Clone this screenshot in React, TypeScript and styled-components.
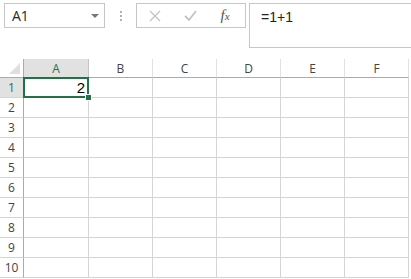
import React from "react";
import styled, { createGlobalStyle } from "styled-components";

const GlobalStyle = createGlobalStyle`
  *, *::before, *::after {
    box-sizing: border-box;
  }
  html, body {
    margin: 0;
    padding: 0;
    background: #ffffff;
    font-family: "Open Sans", "Liberation Sans", sans-serif;
    overflow: hidden;
  }
`;

const COLUMNS = ["A", "B", "C", "D", "E", "F"];
const ROWS = [1, 2, 3, 4, 5, 6, 7, 8, 9, 10];

const Page = styled.div`
  width: 411px;
  height: 279px;
  display: flex;
  flex-direction: column;
  overflow: hidden;
`;

const FormulaBar = styled.div`
  display: flex;
  align-items: flex-start;
  padding: 3px 0 0 4px;
  height: 59px;
`;

const NameBox = styled.div`
  width: 101px;
  height: 25px;
  border: 1px solid #c6c6c6;
  display: flex;
  align-items: center;
  justify-content: space-between;
  padding: 0 5px 0 7px;
  font-size: 14px;
  color: #262626;
`;

const Caret = styled.span`
  width: 0;
  height: 0;
  border-left: 4px solid transparent;
  border-right: 4px solid transparent;
  border-top: 4px solid #777;
`;

const Grip = styled.div`
  width: 31px;
  height: 25px;
  display: flex;
  flex-direction: column;
  align-items: center;
  justify-content: center;
  gap: 2px;
`;

const GripDot = styled.span`
  width: 2px;
  height: 2px;
  background: #b0b0b0;
`;

const ButtonBox = styled.div`
  width: 110px;
  height: 25px;
  border: 1px solid #c6c6c6;
  display: flex;
  align-items: center;
  padding-left: 8px;
  gap: 15px;
`;

const IconButton = styled.span<{ $italic?: boolean }>`
  width: 20px;
  display: flex;
  align-items: center;
  justify-content: center;
  color: #555;
  font-family: "Liberation Serif", serif;
  font-style: ${(p) => (p.$italic ? "italic" : "normal")};
  font-size: 15px;
`;

const FormulaInput = styled.div`
  flex: 1;
  height: 45px;
  margin-left: 3px;
  border: 1px solid #c6c6c6;
  border-right: none;
  padding: 5px 0 0 11px;
  font-family: "Liberation Sans", sans-serif;
  font-size: 14px;
  color: #222;
`;

const Sheet = styled.div`
  display: grid;
  grid-template-columns: 24px 65px repeat(5, 64px);
  grid-template-rows: 19px repeat(10, 20px);
  border-right: 1px solid #d4d4d4;
  width: 409px;
`;

const Corner = styled.div`
  position: relative;
  background: #ffffff;
  border-right: 1px solid #ababab;
  border-bottom: 1px solid #ababab;
  &::after {
    content: "";
    position: absolute;
    right: 3px;
    bottom: 3px;
    width: 0;
    height: 0;
    border-left: 11px solid transparent;
    border-bottom: 11px solid #dfdfdf;
  }
`;

const ColHeader = styled.div<{ $active?: boolean }>`
  display: flex;
  align-items: center;
  justify-content: center;
  border-right: 1px solid ${(p) => (p.$active ? "#c4c4c4" : "#e1e1e1")};
  border-bottom: 1px solid #ababab;
  background: ${(p) => (p.$active ? "#e1e1e1" : "#ffffff")};
  color: ${(p) => (p.$active ? "#217346" : "#444444")};
  font-size: 12px;
`;

const RowHeader = styled.div<{ $active?: boolean }>`
  display: flex;
  align-items: center;
  justify-content: center;
  border-right: 1px solid #ababab;
  border-bottom: 1px solid #d4d4d4;
  background: ${(p) => (p.$active ? "#e1e1e1" : "#ffffff")};
  color: ${(p) => (p.$active ? "#217346" : "#444444")};
  font-size: 12px;
`;

const Cell = styled.div`
  position: relative;
  border-right: 1px solid #d4d4d4;
  border-bottom: 1px solid #d4d4d4;
  display: flex;
  align-items: center;
  justify-content: flex-end;
  padding-right: 3px;
  font-family: "Liberation Sans", sans-serif;
  font-size: 15px;
  color: #000;
`;

const Selection = styled.div`
  position: absolute;
  left: -1px;
  top: -1px;
  right: -1px;
  bottom: -1px;
  border: 2px solid #217346;
  pointer-events: none;
  z-index: 2;
`;

const FillHandle = styled.div`
  position: absolute;
  right: -5px;
  bottom: -5px;
  width: 7px;
  height: 7px;
  background: #217346;
  border: 1px solid #ffffff;
`;

export default function App() {
  return (
    <Page>
      <GlobalStyle />
      <FormulaBar>
        <NameBox>
          A1
          <Caret />
        </NameBox>
        <Grip>
          <GripDot />
          <GripDot />
          <GripDot />
        </Grip>
        <ButtonBox>
          <IconButton>
            <svg width="12" height="12" viewBox="0 0 12 12">
              <path d="M1 1 L11 11 M11 1 L1 11" stroke="#c3c3c3" strokeWidth="1.3" />
            </svg>
          </IconButton>
          <IconButton>
            <svg width="13" height="11" viewBox="0 0 13 11">
              <path d="M1 6 L5 10 L12 1" stroke="#c3c3c3" strokeWidth="1.8" fill="none" />
            </svg>
          </IconButton>
          <IconButton $italic>
            f<span style={{ fontSize: 11 }}>x</span>
          </IconButton>
        </ButtonBox>
        <FormulaInput>=1+1</FormulaInput>
      </FormulaBar>
      <Sheet>
        <Corner />
        {COLUMNS.map((c) => (
          <ColHeader key={c} $active={c === "A"}>
            {c}
          </ColHeader>
        ))}
        {ROWS.map((r) => (
          <React.Fragment key={r}>
            <RowHeader $active={r === 1}>{r}</RowHeader>
            {COLUMNS.map((c) => {
              const selected = r === 1 && c === "A";
              return (
                <Cell key={c + r}>
                  {selected && "2"}
                  {selected && (
                    <Selection>
                      <FillHandle />
                    </Selection>
                  )}
                </Cell>
              );
            })}
          </React.Fragment>
        ))}
      </Sheet>
    </Page>
  );
}
